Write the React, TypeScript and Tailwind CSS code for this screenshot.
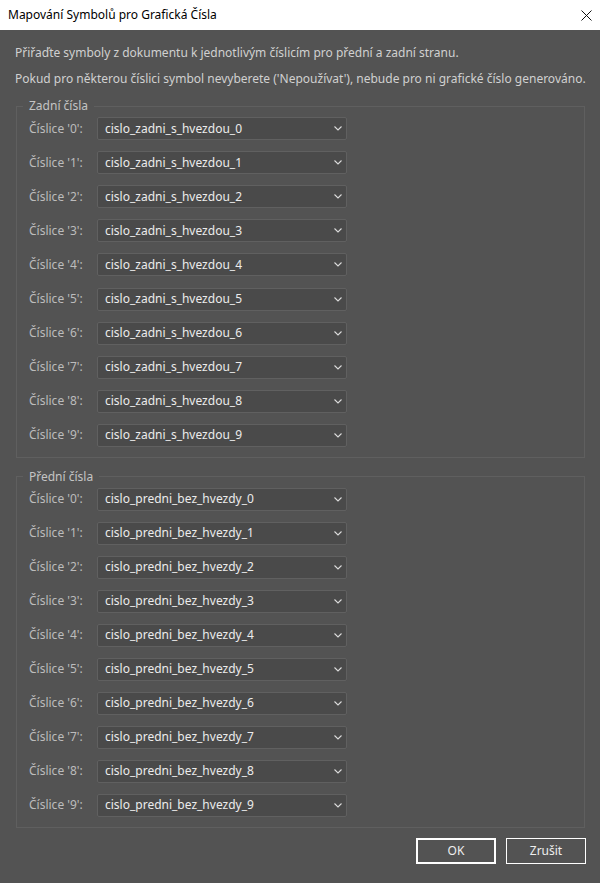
import { useState } from "react";

const digits = ["0", "1", "2", "3", "4", "5", "6", "7", "8", "9"];

function Chevron() {
  return (
    <svg width="8" height="5" viewBox="0 0 8 5" className="text-[#dcdcdc]">
      <path d="M0.5 0.5 L4 4 L7.5 0.5" fill="none" stroke="currentColor" strokeWidth="1.1" />
    </svg>
  );
}

function Combo({ value }: { value: string }) {
  return (
    <div className="flex h-[23px] w-[250px] items-center justify-between rounded-[2px] border border-[#606060] bg-[#4a4a4a] pl-[7px] pr-[4px]">
      <span className="text-[12px] text-[#ececec]">{value}</span>
      <Chevron />
    </div>
  );
}

function DigitGroup({ title, prefix, gap }: { title: string; prefix: string; gap: string }) {
  return (
    <fieldset className="ml-[16px] mr-[15px] border border-[#5f5f5f] px-[6px] pb-[10px]">
      <legend className="px-[6px] text-[12px] leading-[16px] text-[#c4c4c4]">{title}</legend>
      <div className={"mt-[3px] flex flex-col pl-[6px] " + gap}>
        {digits.map((d) => (
          <div key={d} className="flex items-center">
            <span className="w-[68px] text-[12px] text-[#bcbcbc]">Číslice '{d}':</span>
            <Combo value={prefix + d} />
          </div>
        ))}
      </div>
    </fieldset>
  );
}

export default function App() {
  const [open] = useState(true);
  if (!open) return null;

  return (
    <div
      className="flex h-[883px] w-[600px] flex-col bg-[#535353]"
      style={{ fontFamily: '"Noto Sans", "Open Sans", sans-serif' }}
    >
      <div className="flex h-[30px] shrink-0 items-center justify-between bg-white pl-[8px] pr-[8px]">
        <span className="text-[12px] text-black">Mapování Symbolů pro Grafická Čísla</span>
        <svg width="11" height="11" viewBox="0 0 11 11">
          <path d="M0.5 0.5 L10.5 10.5 M10.5 0.5 L0.5 10.5" stroke="#111" strokeWidth="1" />
        </svg>
      </div>

      <div className="flex flex-col pt-[15px] text-[12px] leading-[16px] text-[#d0d0d0]">
        <p className="pl-[15px]">Přiřaďte symboly z dokumentu k jednotlivým číslicím pro přední a zadní stranu.</p>
        <p className="mt-[10px] pl-[15px]">
          Pokud pro některou číslici symbol nevyberete ('Nepoužívat'), nebude pro ni grafické číslo generováno.
        </p>

        <div className="mt-[11px]">
          <DigitGroup title="Zadní čísla" prefix="cislo_zadni_s_hvezdou_" gap="gap-[11.12px]" />
        </div>
        <div className="mt-[11px]">
          <DigitGroup title="Přední čísla" prefix="cislo_predni_bez_hvezdy_" gap="gap-[11px]" />
        </div>

        <div className="mt-[10px] flex justify-end gap-[10px] pr-[14px]">
          <button className="h-[26px] w-[80px] border-2 border-white text-[12px] text-[#eeeeee]">OK</button>
          <button className="h-[26px] w-[80px] border border-white text-[12px] text-[#eeeeee]">Zrušit</button>
        </div>
      </div>
    </div>
  );
}
